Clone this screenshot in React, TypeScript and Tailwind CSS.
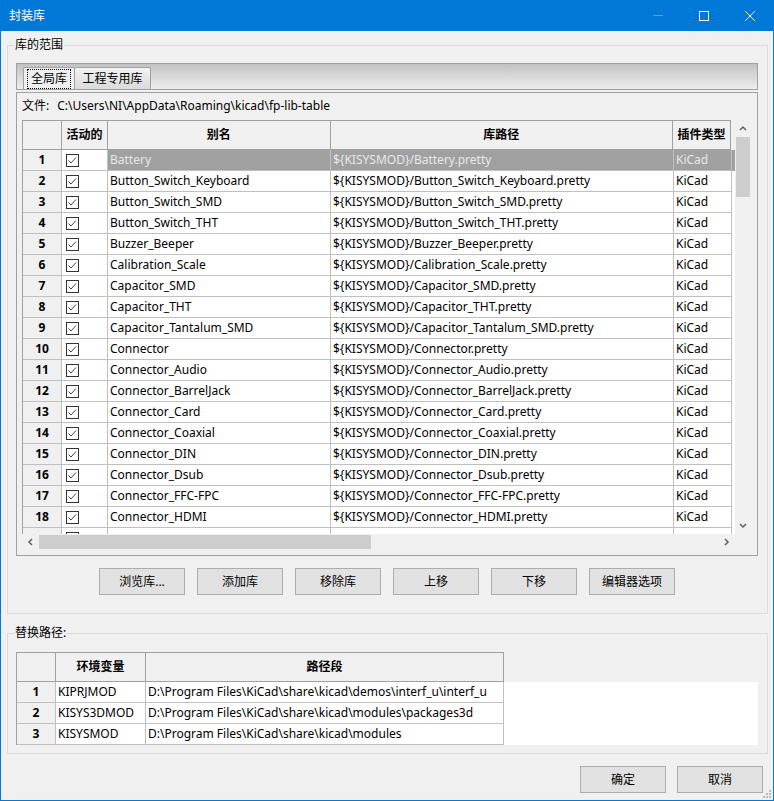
import React from 'react';

const LIBS = [
  'Battery',
  'Button_Switch_Keyboard',
  'Button_Switch_SMD',
  'Button_Switch_THT',
  'Buzzer_Beeper',
  'Calibration_Scale',
  'Capacitor_SMD',
  'Capacitor_THT',
  'Capacitor_Tantalum_SMD',
  'Connector',
  'Connector_Audio',
  'Connector_BarrelJack',
  'Connector_Card',
  'Connector_Coaxial',
  'Connector_DIN',
  'Connector_Dsub',
  'Connector_FFC-FPC',
  'Connector_HDMI',
];

const ENV_VARS = [
  { name: 'KIPRJMOD', path: 'D:\\Program Files\\KiCad\\share\\kicad\\demos\\interf_u\\interf_u' },
  { name: 'KISYS3DMOD', path: 'D:\\Program Files\\KiCad\\share\\kicad\\modules\\packages3d' },
  { name: 'KISYSMOD', path: 'D:\\Program Files\\KiCad\\share\\kicad\\modules' },
];

const BUTTONS = ['浏览库...', '添加库', '移除库', '上移', '下移', '编辑器选项'];

function CheckBox() {
  return (
    <svg width="13" height="13" viewBox="0 0 13 13">
      <rect x="0.5" y="0.5" width="12" height="12" fill="white" stroke="#333333" />
      <path d="M2.5 6.5 L5 9 L10 3.5" fill="none" stroke="#444444" strokeWidth="1" />
    </svg>
  );
}

function Chevron({ dir }: { dir: 'up' | 'down' | 'left' | 'right' }) {
  const d = {
    up: 'M1 5 L4 2 L7 5',
    down: 'M1 2 L4 5 L7 2',
    left: 'M5 1 L2 4 L5 7',
    right: 'M2 1 L5 4 L2 7',
  }[dir];
  return (
    <svg width="8" height="8" viewBox="0 0 8 8">
      <path d={d} fill="none" stroke="#606060" strokeWidth="1.5" />
    </svg>
  );
}

function Button({ label }: { label: string }) {
  return (
    <div className="flex h-[27px] w-[86px] items-center justify-center border border-[#adadad] bg-[#e1e1e1] text-[12px] text-black">
      {label}
    </div>
  );
}

function LibGrid() {
  return (
    <div className="flex h-[430px] w-[729px]">
      <div className="flex w-[713px] flex-col">
        {/* header */}
        <div className="flex h-[30px] shrink-0 font-bold">
          <div className="flex w-[709px] border-l border-t border-[#a0a0a0] bg-[#f0f0f0]">
            <div className="w-[39px] border-b border-r border-[#a0a0a0]" />
            <div className="flex w-[46px] items-center justify-center border-b border-r border-[#a0a0a0]">活动的</div>
            <div className="flex w-[223px] items-center justify-center border-b border-r border-[#a0a0a0]">别名</div>
            <div className="flex w-[343px] items-center justify-center border-b border-r border-[#a0a0a0]">库路径</div>
            <div className="flex w-[58px] items-center justify-center border-b border-r border-[#a0a0a0]">插件类型</div>
          </div>
        </div>
        {/* rows */}
        <div className="h-[384px] shrink-0 overflow-hidden border-l border-[#a0a0a0] bg-white">
          {LIBS.map((name, i) => {
            const sel = i === 0;
            return (
              <div key={name} className={`flex h-[21px] ${sel ? 'bg-[#a0a0a0] text-[#e8e8e8]' : 'bg-white text-black'}`}>
                <div className="flex w-[39px] items-center justify-center border-b border-r border-[#c0c0c0] bg-[#f0f0f0] font-bold text-black">
                  {i + 1}
                </div>
                <div className="flex w-[46px] items-center border-b border-r border-[#c0c0c0] bg-white pl-[4px]">
                  <CheckBox />
                </div>
                <div className="flex w-[223px] items-center border-b border-r border-[#c0c0c0] px-[2px] whitespace-nowrap">
                  {name}
                </div>
                <div className="flex w-[343px] items-center border-b border-r border-[#c0c0c0] px-[2px] whitespace-nowrap">
                  {'${KISYSMOD}/' + name + '.pretty'}
                </div>
                <div className="flex w-[58px] items-center border-b border-r border-[#c0c0c0] px-[2px]">KiCad</div>
                <div className="flex-1" />
              </div>
            );
          })}
          {/* partially visible row 19 */}
          <div className="flex h-[21px] bg-white">
            <div className="w-[39px] border-r border-[#c0c0c0] bg-[#f0f0f0]" />
            <div className="flex w-[46px] items-center border-r border-[#c0c0c0] pl-[4px]">
              <CheckBox />
            </div>
            <div className="w-[223px] border-r border-[#c0c0c0]" />
            <div className="w-[343px] border-r border-[#c0c0c0]" />
            <div className="w-[58px] border-r border-[#c0c0c0]" />
          </div>
        </div>
        {/* horizontal scrollbar */}
        <div className="flex h-[16px] shrink-0 items-center bg-[#f0f0f0]">
          <div className="flex w-[17px] items-center justify-center">
            <Chevron dir="left" />
          </div>
          <div className="h-[14px] w-[332px] bg-[#cdcdcd]" />
          <div className="flex-1" />
          <div className="flex w-[16px] items-center justify-center">
            <Chevron dir="right" />
          </div>
        </div>
      </div>
      {/* vertical scrollbar */}
      <div className="flex w-[16px] flex-col bg-[#f0f0f0]">
        <div className="flex h-[17px] items-center justify-center">
          <Chevron dir="up" />
        </div>
        <div className="ml-[1px] h-[60px] w-[14px] bg-[#cdcdcd]" />
        <div className="flex-1" />
        <div className="flex h-[16px] items-center justify-center">
          <Chevron dir="down" />
        </div>
        <div className="h-[16px]" />
      </div>
    </div>
  );
}

function EnvGrid() {
  return (
    <div className="flex w-[742px] flex-col">
      <div className="flex h-[30px] font-bold">
        <div className="flex w-[488px] border-l border-t border-[#a0a0a0] bg-[#f0f0f0]">
          <div className="w-[39px] border-b border-r border-[#a0a0a0]" />
          <div className="flex w-[90px] items-center justify-center border-b border-r border-[#a0a0a0]">环境变量</div>
          <div className="flex w-[358px] items-center justify-center border-b border-r border-[#a0a0a0]">路径段</div>
        </div>
      </div>
      {ENV_VARS.map((v, i) => (
        <div key={v.name} className="flex h-[21px] bg-white">
          <div className="flex w-[488px] border-l border-[#a0a0a0]">
            <div className="flex w-[39px] items-center justify-center border-b border-r border-[#c0c0c0] bg-[#f0f0f0] font-bold">
              {i + 1}
            </div>
            <div className="flex w-[90px] items-center border-b border-r border-[#c0c0c0] px-[2px] whitespace-nowrap">
              {v.name}
            </div>
            <div className="flex w-[358px] items-center overflow-hidden border-b border-r border-[#c0c0c0] px-[2px] whitespace-nowrap">
              {v.path}
            </div>
          </div>
        </div>
      ))}
    </div>
  );
}

export default function App() {
  return (
    <div className="relative flex h-[801px] w-[774px] flex-col border-x border-b border-[#0078d7] bg-[#f0f0f0] font-['Noto_Sans','Noto_Sans_CJK_SC',sans-serif] text-[12px] leading-[16px] text-black">
      {/* title bar */}
      <div className="flex h-[31px] shrink-0 items-center bg-[#0078d7] pl-[8px] text-white">
        <span className="flex-1">封装库</span>
        <div className="flex h-full">
          <div className="flex w-[46px] items-center justify-center">
            <div className="h-[1px] w-[10px] bg-[#5a9fe3]" />
          </div>
          <div className="flex w-[46px] items-center justify-center">
            <div className="h-[10px] w-[10px] border border-white" />
          </div>
          <div className="flex w-[46px] items-center justify-center">
            <svg width="10" height="10" viewBox="0 0 10 10">
              <path d="M0 0 L10 10 M10 0 L0 10" stroke="white" strokeWidth="1" />
            </svg>
          </div>
        </div>
      </div>

      <div className="flex flex-col pl-[6px] pr-[5px]">
        {/* 库的范围 */}
        <fieldset className="mt-[6px] w-[761px] border border-[#dcdcdc]">
          <legend className="ml-[6px] px-[1px] leading-[16px]">库的范围</legend>
          <div className="flex flex-col pl-[8px] pr-[9px] pt-[10px] pb-[18px]">
            <div className="flex w-[742px] flex-col">
              {/* tab strip */}
              <div className="flex h-[27px] items-end border border-[#a0a0a0] bg-gradient-to-b from-[#c2c2c2] to-[#eeeeee] pl-[6px]">
                <div className="flex h-[22px] w-[52px] items-start justify-center rounded-t-[2px] border border-b-0 border-[#a0a0a0] bg-[#f0f0f0] pt-[1px]">
                  <span className="border border-dotted border-black px-[3px] leading-[18px]">全局库</span>
                </div>
                <div className="flex h-[22px] w-[76px] items-center justify-center rounded-t-[2px] border border-l-0 border-b-0 border-[#a0a0a0] bg-gradient-to-b from-[#f2f2f2] to-[#dadada]">
                  工程专用库
                </div>
              </div>
              {/* panel */}
              <div className="mt-[2px] flex flex-col border border-[#a0a0a0] pl-[5px] pr-[6px] pb-[5px]">
                <div className="mt-[4px] flex h-[17px] items-center whitespace-nowrap">
                  <span>文件:</span>
                  <span className="ml-[8px]">C:\Users\NI\AppData\Roaming\kicad\fp-lib-table</span>
                </div>
                <div className="mt-[6px]">
                  <LibGrid />
                </div>
              </div>
            </div>
            <div className="mt-[12px] flex justify-center gap-[12px]">
              {BUTTONS.map((b) => (
                <Button key={b} label={b} />
              ))}
            </div>
          </div>
        </fieldset>

        {/* 替换路径 */}
        <fieldset className="mt-[11px] w-[761px] border border-[#dcdcdc]">
          <legend className="ml-[6px] px-[1px] leading-[16px]">替换路径:</legend>
          <div className="pl-[8px] pt-[11px] pb-[8px]">
            <EnvGrid />
          </div>
        </fieldset>

        <div className="mt-[12px] flex justify-end gap-[11px] pr-[5px]">
          <Button label="确定" />
          <Button label="取消" />
        </div>
      </div>

      {/* size grip */}
      <svg className="absolute bottom-[1px] right-[1px]" width="10" height="10" viewBox="0 0 10 10">
        <rect x="7" y="1" width="2" height="2" fill="#bcbcbc" />
        <rect x="4" y="4" width="2" height="2" fill="#bcbcbc" />
        <rect x="7" y="4" width="2" height="2" fill="#bcbcbc" />
        <rect x="1" y="7" width="2" height="2" fill="#bcbcbc" />
        <rect x="4" y="7" width="2" height="2" fill="#bcbcbc" />
        <rect x="7" y="7" width="2" height="2" fill="#bcbcbc" />
      </svg>
    </div>
  );
}
